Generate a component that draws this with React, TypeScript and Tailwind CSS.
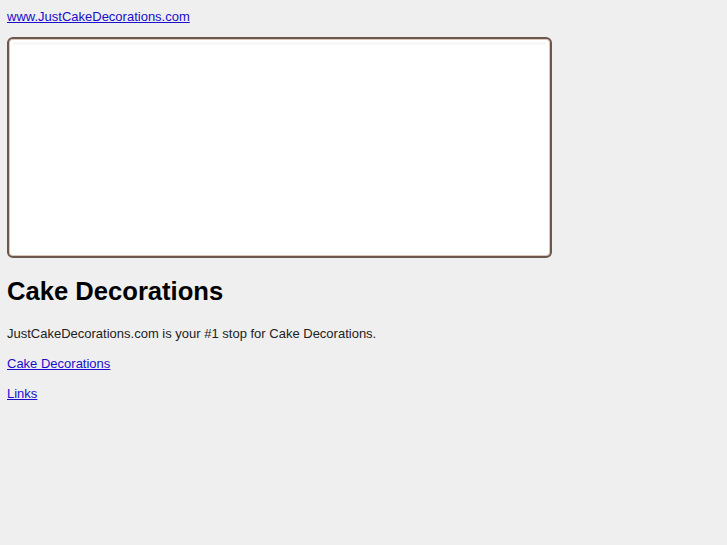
export default function App() {
  return (
    <div
      className="min-h-[545px] bg-[#efefef] pt-[9px] pl-[7px] text-[13px] text-[#222222]"
      style={{ fontFamily: '"Liberation Sans", Arial, sans-serif' }}
    >
      <div className="leading-[16px]">
        <a href="#" className="text-[#1a0dcc] underline">www.JustCakeDecorations.com </a>
      </div>
      <div className="mt-[12px] h-[221px] w-[545px] rounded-[6px] border-2 border-[#6b574b] bg-white shadow-[inset_0_0_0_1px_#d9c8bc]">
        <div className="mx-[4px] mt-[3px] h-[3px] bg-[#f6f7f6]" />
      </div>
      <h1 className="mt-[18px] text-[25.6px] font-bold leading-[30px] text-black">Cake Decorations</h1>
      <p className="mt-[20px] leading-[16px]">JustCakeDecorations.com is your #1 stop for Cake Decorations.</p>
      <p className="mt-[14px] leading-[16px]">
        <a href="#" className="text-[#1a0dcc] underline">Cake Decorations</a>
      </p>
      <p className="mt-[14px] leading-[16px]">
        <a href="#" className="text-[#1a0dcc] underline">Links</a>
      </p>
    </div>
  );
}
